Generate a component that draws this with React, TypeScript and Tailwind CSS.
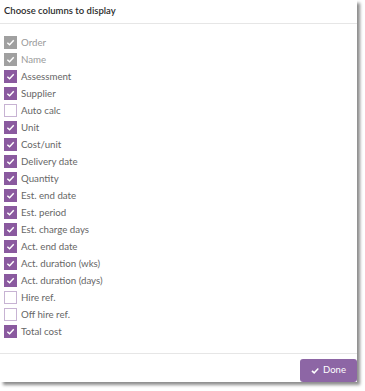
import React from "react";

type Col = { label: string; checked: boolean; locked?: boolean };

const columns: Col[] = [
  { label: "Order", checked: true, locked: true },
  { label: "Name", checked: true, locked: true },
  { label: "Assessment", checked: true },
  { label: "Supplier", checked: true },
  { label: "Auto calc", checked: false },
  { label: "Unit", checked: true },
  { label: "Cost/unit", checked: true },
  { label: "Delivery date", checked: true },
  { label: "Quantity", checked: true },
  { label: "Est. end date", checked: true },
  { label: "Est. period", checked: true },
  { label: "Est. charge days", checked: true },
  { label: "Act. end date", checked: true },
  { label: "Act. duration (wks)", checked: true },
  { label: "Act. duration (days)", checked: true },
  { label: "Hire ref.", checked: false },
  { label: "Off hire ref.", checked: false },
  { label: "Total cost", checked: true },
];

function Box({ checked, locked }: { checked: boolean; locked?: boolean }) {
  if (!checked) {
    return <span className="h-[13px] w-[13px] shrink-0 border border-[#c7b3d3] bg-white" />;
  }
  return (
    <span
      className={
        "flex h-[13px] w-[13px] shrink-0 items-center justify-center " +
        (locked ? "bg-[#a0a0a0]" : "bg-[#8a5a9f]")
      }
    >
      <svg width="9" height="9" viewBox="0 0 10 10" fill="none">
        <path d="M1.5 5.2 L4 7.6 L8.6 2.6" stroke="white" strokeWidth="1.6" />
      </svg>
    </span>
  );
}

export default function App() {
  return (
    <div className="h-[391px] w-[365px] bg-white font-['Lato',sans-serif]">
      <div className="flex h-[382px] w-[357px] flex-col bg-white shadow-[3px_3px_3px_rgba(0,0,0,0.45)]">
        <div className="h-[24px] border-b border-[#e6e6e6] px-[4px] pt-[4px] text-[9.5px] font-semibold text-[#2b2b2b]">
          Choose columns to display
        </div>
        <div className="flex flex-col pt-[10px]">
          {columns.map((c) => (
            <div key={c.label} className="flex h-[17px] items-center gap-[4px] pl-[4px]">
              <Box checked={c.checked} locked={c.locked} />
              <span
                className={
                  "text-[9.7px] " + (c.locked ? "text-[#9a9a9a]" : "text-[#666666]")
                }
              >
                {c.label}
              </span>
            </div>
          ))}
        </div>
        <div className="mt-auto flex h-[29px] items-end justify-end border-t border-[#e6e6e6]">
          <button className="flex h-[23px] w-[57px] items-center justify-center gap-[4px] rounded-[3px] bg-[#8d66a5] text-[9.5px] text-white">
            <svg width="8" height="8" viewBox="0 0 10 10" fill="white">
              <path d="M0.5 5.5 L2 4 L4 6 L8.5 1.2 L9.8 2.6 L4 8.8 Z" />
            </svg>
            Done
          </button>
        </div>
      </div>
    </div>
  );
}
